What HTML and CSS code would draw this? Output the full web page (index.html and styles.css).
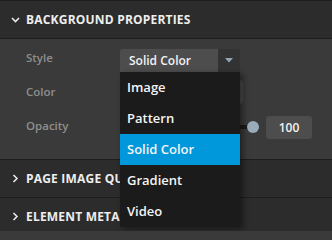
FILE: index.html
```html
<!DOCTYPE html>
<html>
<head>
<meta charset="utf-8">
<link rel="stylesheet" href="styles.css">
</head>
<body>
<div class="panel">
  <div class="section-head">
    <svg class="chev" width="9" height="6" viewBox="0 0 9 6"><path d="M1 1 L4.5 4.5 L8 1" fill="none" stroke="#e8e8e8" stroke-width="1.6"/></svg>
    <span class="head-title">BACKGROUND PROPERTIES</span>
  </div>
  <div class="section-body">
    <div class="row">
      <span class="label">Style</span>
      <div class="select">
        <div class="select-value">Solid Color</div>
        <div class="select-arrow"><svg width="8" height="5" viewBox="0 0 8 5"><path d="M0 0 H8 L4 4.5 Z" fill="#93a4b3"/></svg></div>
        <ul class="menu">
          <li class="item">Image</li>
          <li class="item">Pattern</li>
          <li class="item active">Solid Color</li>
          <li class="item">Gradient</li>
          <li class="item">Video</li>
        </ul>
      </div>
    </div>
    <div class="row">
      <span class="label">Color</span>
      <div class="swatch"></div>
    </div>
    <div class="row">
      <span class="label">Opacity</span>
      <div class="slider">
        <div class="track"></div>
        <div class="knob"></div>
      </div>
      <div class="value">100</div>
    </div>
  </div>
  <div class="section-head">
    <svg class="chev" width="9" height="9" viewBox="0 0 9 9"><path d="M2.5 1 L6 4.5 L2.5 8" fill="none" stroke="#e8e8e8" stroke-width="1.6"/></svg>
    <span class="head-title clipped">PAGE IMAGE QUALITY</span>
  </div>
  <div class="section-head">
    <svg class="chev" width="9" height="9" viewBox="0 0 9 9"><path d="M2.5 1 L6 4.5 L2.5 8" fill="none" stroke="#e8e8e8" stroke-width="1.6"/></svg>
    <span class="head-title clipped">ELEMENT METADATA</span>
  </div>
</div>
</body>
</html>
```

FILE: styles.css
```css
html, body {
  margin: 0;
  padding: 0;
  background: #3a3a3a;
}
body {
  width: 332px;
  height: 231px;
  overflow: hidden;
  font-family: "Open Sans", "Noto Sans", sans-serif;
}
.panel {
  border-top: 1px solid #1d1d1d;
}
.section-head {
  height: 37px;
  background: #2c2c2c;
  border-bottom: 1px solid #1d1d1d;
  display: flex;
  align-items: center;
  padding-left: 11px;
  gap: 6px;
}
.chev {
  display: block;
  flex: none;
}
.head-title {
  color: #eeeeee;
  font-size: 12px;
  font-weight: 700;
  letter-spacing: 0.2px;
  white-space: nowrap;
}
.head-title.clipped {
  width: 94px;
  overflow: hidden;
}
.section-body {
  background: #3a3a3a;
  border-bottom: 1px solid #1d1d1d;
  padding: 2px 0 16px 0;
}
.row {
  height: 34px;
  display: flex;
  align-items: center;
  padding-left: 26px;
}
.label {
  width: 94px;
  flex: none;
  color: #8e8e8e;
  font-size: 11.5px;
  font-weight: 600;
  margin-top: -2px;
}
.select {
  position: relative;
  width: 120px;
  height: 23px;
  display: flex;
  margin-top: 4px;
  z-index: 5;
}
.select-value {
  flex: 1;
  background: #4d4d4d;
  color: #f2f2f2;
  font-size: 12px;
  font-weight: 600;
  display: flex;
  align-items: center;
  padding-left: 9px;
  border-top-left-radius: 3px;
}
.select-arrow {
  width: 22px;
  background: #333333;
  display: flex;
  align-items: center;
  justify-content: center;
  border-top-right-radius: 3px;
}
.select-arrow svg {
  display: block;
}
.menu {
  position: absolute;
  left: 0;
  top: 23px;
  width: 120px;
  margin: 0;
  padding: 0;
  list-style: none;
  background: #1b1b1b;
  box-shadow: 3px 2px 6px rgba(0, 0, 0, 0.45);
}
.item {
  height: 31px;
  display: flex;
  align-items: center;
  padding-left: 7px;
  color: #f4f4f4;
  font-size: 13px;
  font-weight: 600;
}
.item.active {
  background: #0097db;
}
.swatch {
  width: 123px;
  height: 24px;
  background: #4d4d4d;
  border-radius: 3px;
}
.slider {
  position: relative;
  width: 139px;
  height: 12px;
  display: flex;
  align-items: center;
  margin-top: 2px;
}
.track {
  flex: 1;
  height: 4px;
  background: #1b1b1b;
}
.knob {
  width: 12px;
  height: 12px;
  border-radius: 50%;
  background: #9aabb9;
  margin-left: -6px;
}
.value {
  margin-left: 7px;
  width: 46px;
  height: 23px;
  background: #4d4d4d;
  border-radius: 3px;
  color: #f2f2f2;
  font-size: 12px;
  font-weight: 600;
  display: flex;
  align-items: center;
  justify-content: center;
  margin-top: 2px;
}
```
